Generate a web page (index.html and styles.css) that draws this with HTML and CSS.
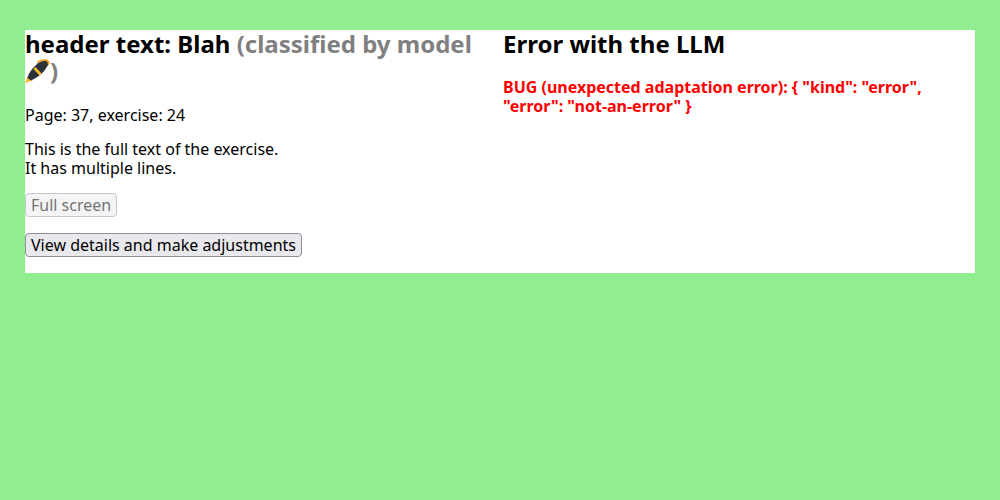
FILE: index.html
```html
<!DOCTYPE html>
<html lang="en">
<head>
<meta charset="utf-8">
<title>Exercise adaptation</title>
<link rel="stylesheet" href="styles.css">
</head>
<body>
<main class="panel">
  <section class="column">
    <h2 class="title">header text: Blah <span class="classified">(classified by model <svg class="pen" viewBox="0 0 25 25" aria-hidden="true"><path d="M0 23.5L2.5 16.5L8 20.5Q4 21 0 23.5Z" fill="#f9b233"/><path d="M2.5 18Q3 14 8 8L13 3Q18 0 22 0Q24.500 2 22.500 6Q20 11 15 15Q10 19 6 20.500Z" fill="#2b3239"/><path d="M9.500 8L15.500 14.500" stroke="#fbc02d" stroke-width="2.600"/><path d="M13 2Q17 -.5 21 .2Q24 1 23.500 4" fill="none" stroke="#f59c1a" stroke-width="1.800" stroke-linecap="round"/></svg>)</span></h2>
    <p class="text">Page: 37, exercise: 24</p>
    <p class="text">This is the full text of the exercise.<br>It has multiple lines.</p>
    <p class="action"><button class="button" type="button" disabled>Full screen</button></p>
    <p class="action"><button class="button" type="button">View details and make adjustments</button></p>
  </section>
  <section class="column">
    <h2 class="title">Error with the LLM</h2>
    <p class="text error">BUG (unexpected adaptation error): { "kind": "error", "error": "not-an-error" }</p>
  </section>
</main>
</body>
</html>
```

FILE: styles.css
```css
body {
  margin: 0;
  padding: 30px 25px;
  background: #90ee90;
  color: #000;
  font: 16px/19px "Noto Sans", sans-serif;
}
.panel {
  display: grid;
  grid-template-columns: 1fr 1fr;
  gap: 6px;
  background: #fff;
}
.title {
  margin: 0 0 21px;
  font-size: 24px;
  line-height: 27px;
}
.classified { color: #808080; }
.pen {
  width: 25px;
  height: 25px;
  vertical-align: -5px;
  overflow: visible;
}
.text { margin: 0 0 15px; }
.action { margin: 0 0 16px; }
.error { color: #f00; font-weight: bold; }
.button {
  display: block;
  padding: 1px 5px;
  border: 1px solid #8f8f9d;
  border-radius: 4px;
  background: #e9e9ed;
  color: #000;
  font: inherit;
  line-height: 20px;
}
.button:disabled {
  border-color: #c7c7ce;
  background: #f4f4f6;
  color: #757575;
}
```
